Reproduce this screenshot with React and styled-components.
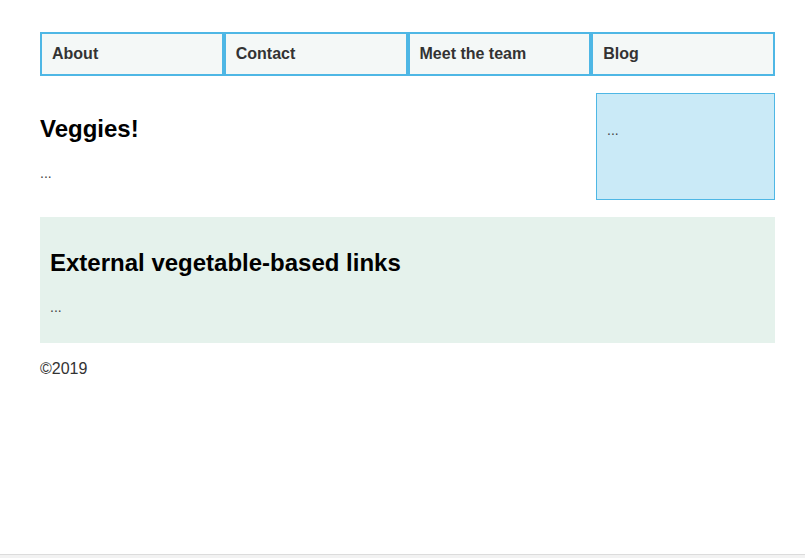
import React from 'react';
import styled, { createGlobalStyle } from 'styled-components';

const GlobalStyle = createGlobalStyle`
    html, body {
        margin: 0;
        padding: 0;
        background: #fff;
    }
    body {
        font-family: "Liberation Sans", Arial, sans-serif;
        color: #333;
    }
`;

const Page = styled.div`
    min-height: 100vh;
    display: flex;
    flex-direction: column;
    box-sizing: border-box;
`;

const Container = styled.div`
    padding: 32px 30px 0 40px;
    display: flex;
    flex-direction: column;
`;

const Nav = styled.nav`
    display: grid;
    grid-template-columns: repeat(4, 1fr);
    width: 735px;
`;

const NavItem = styled.a`
    display: block;
    box-sizing: border-box;
    height: 44px;
    padding: 10px;
    border: 2px solid #4eb7e5;
    background: #f4f8f7;
    font-size: 16px;
    line-height: 20px;
    font-weight: bold;
    color: #333;
    text-decoration: none;
`;

const Row = styled.div`
    display: grid;
    grid-template-columns: 1fr 179px;
    column-gap: 10px;
    width: 735px;
    margin-top: 17px;
`;

const Main = styled.main`
    display: block;
`;

const Heading = styled.h2`
    margin: 22px 0 20px;
    font-size: 24px;
    line-height: 28px;
    font-weight: bold;
    color: #000;
`;

const Text = styled.p`
    margin: 0 0 16px;
    font-size: 14px;
    line-height: 21px;
    color: #444;
`;

const Aside = styled.aside`
    box-sizing: border-box;
    height: 107px;
    padding: 10px;
    background: #caeaf7;
    border: 1px solid #4eb7e5;

    & p {
        margin-top: 16px;
    }
`;

const Links = styled.section`
    width: 735px;
    box-sizing: border-box;
    margin-top: 17px;
    padding: 10px 10px 9px;
    background: #e5f2ec;
`;

const Footer = styled.footer`
    margin-top: 17px;
    font-size: 16px;
    line-height: 18px;
    color: #333;
`;

const Strip = styled.div`
    margin-top: auto;
    height: 3px;
    border-top: 1px solid #dcdcdc;
    background: #f2f2f2;
`;

const navLinks = ['About', 'Contact', 'Meet the team', 'Blog'];

function App() {
    return (
        <Page>
            <GlobalStyle />
            <Container>
                <Nav>
                    {navLinks.map((label) => (
                        <NavItem key={label} href="#">{label}</NavItem>
                    ))}
                </Nav>
                <Row>
                    <Main>
                        <Heading>Veggies!</Heading>
                        <Text>...</Text>
                    </Main>
                    <Aside>
                        <Text>...</Text>
                    </Aside>
                </Row>
                <Links>
                    <Heading>External vegetable-based links</Heading>
                    <Text>...</Text>
                </Links>
                <Footer>©2019</Footer>
            </Container>
            <Strip />
        </Page>
    );
}

export default App;
